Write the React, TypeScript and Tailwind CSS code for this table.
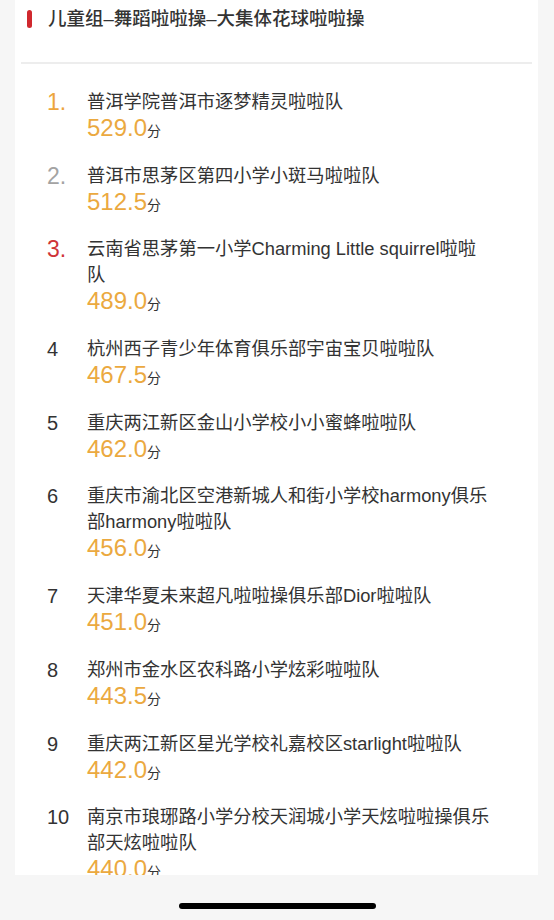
import React from "react";

type Item = { rank: number; name: string; score: string };

const items: Item[] = [
  { rank: 1, name: "普洱学院普洱市逐梦精灵啦啦队", score: "529.0" },
  { rank: 2, name: "普洱市思茅区第四小学小斑马啦啦队", score: "512.5" },
  { rank: 3, name: "云南省思茅第一小学Charming Little squirrel啦啦队", score: "489.0" },
  { rank: 4, name: "杭州西子青少年体育俱乐部宇宙宝贝啦啦队", score: "467.5" },
  { rank: 5, name: "重庆两江新区金山小学校小小蜜蜂啦啦队", score: "462.0" },
  { rank: 6, name: "重庆市渝北区空港新城人和街小学校harmony俱乐部harmony啦啦队", score: "456.0" },
  { rank: 7, name: "天津华夏未来超凡啦啦操俱乐部Dior啦啦队", score: "451.0" },
  { rank: 8, name: "郑州市金水区农科路小学炫彩啦啦队", score: "443.5" },
  { rank: 9, name: "重庆两江新区星光学校礼嘉校区starlight啦啦队", score: "442.0" },
  { rank: 10, name: "南京市琅琊路小学分校天润城小学天炫啦啦操俱乐部天炫啦啦队", score: "440.0" },
];

function Rank({ rank }: { rank: number }) {
  if (rank === 1)
    return <span className="text-[23px] leading-[26px] font-light text-[#eda53d]">1.</span>;
  if (rank === 2)
    return <span className="text-[23px] leading-[26px] font-light text-[#a3a3a3]">2.</span>;
  if (rank === 3)
    return <span className="text-[23px] leading-[26px] font-light text-[#cf3438]">3.</span>;
  return <span className="text-[20px] leading-[26px] text-[#333333]">{rank}</span>;
}

export default function App() {
  return (
    <div
      className="w-[554px] h-[920px] bg-[#f6f6f6] overflow-hidden flex flex-col"
      style={{ fontFamily: '"Liberation Sans", "Noto Sans CJK SC", sans-serif' }}
    >
      <div className="mx-[15px] w-[523px] h-[875px] shrink-0 bg-white overflow-hidden flex flex-col">
        <div className="flex items-center shrink-0 h-[37px] pl-[12px] gap-[16px]">
          <div className="w-[5px] h-[18px] rounded-full bg-[#d0282e]" />
          <span className="text-[18.5px] text-[#333333] font-medium">
            儿童组–舞蹈啦啦操–大集体花球啦啦操
          </span>
        </div>
        <div className="h-[25px] shrink-0" />
        <div className="mx-[6px] h-[2px] shrink-0 bg-[#ededed]" />
        <div className="flex flex-col shrink-0 gap-[21.7px] pt-[25px] pl-[32px]">
          {items.map((it) => (
            <div key={it.rank} className="flex shrink-0">
              <div className="w-[40px] h-[26px] flex items-center shrink-0">
                <Rank rank={it.rank} />
              </div>
              <div className="flex flex-col w-[405px]">
                <div className="text-[18.3px] leading-[26px] text-[#333333]">{it.name}</div>
                <div className="flex items-baseline h-[26px] overflow-visible">
                  <span className="text-[24px] leading-[26px] text-[#eba93f]">{it.score}</span>
                  <span className="text-[14px] leading-[26px] text-[#333333]">分</span>
                </div>
              </div>
            </div>
          ))}
        </div>
      </div>
      <div className="flex-1 flex justify-center pt-[28px]">
        <div className="w-[197px] h-[6px] rounded-full bg-black" />
      </div>
    </div>
  );
}
